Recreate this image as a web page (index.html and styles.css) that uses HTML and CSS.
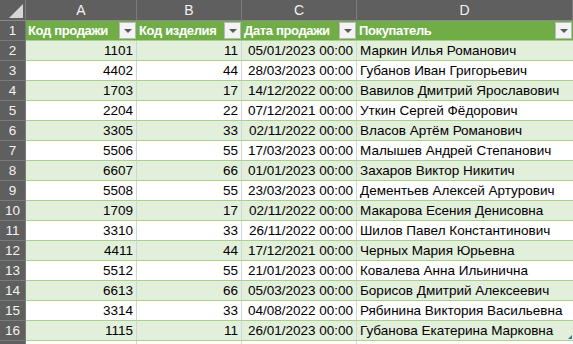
FILE: index.html
```html
<!DOCTYPE html>
<html lang="ru">
<head>
<meta charset="utf-8">
<link rel="stylesheet" href="styles.css">
</head>
<body>
<div class="sheet">
  <div class="row colhead">
    <div class="c rh corner"><svg width="15" height="15" viewBox="0 0 15 15"><polygon points="0,14 14,0 14,14" fill="#d6d6d6"/></svg></div>
    <div class="c a">A</div><div class="c b">B</div><div class="c cc">C</div><div class="c d">D</div>
  </div>
  <div class="row thead">
    <div class="c rh">1</div>
    <div class="c a"><span>Код продажи</span><i class="dd"></i></div>
    <div class="c b"><span>Код изделия</span><i class="dd"></i></div>
    <div class="c cc"><span>Дата продажи</span><i class="dd"></i></div>
    <div class="c d"><span>Покупатель</span><i class="dd"></i></div>
  </div>
  <div class="row band"><div class="c rh">2</div><div class="c a num">1101</div><div class="c b num">11</div><div class="c cc num">05/01/2023 00:00</div><div class="c d">Маркин Илья Романович</div></div>
  <div class="row"><div class="c rh">3</div><div class="c a num">4402</div><div class="c b num">44</div><div class="c cc num">28/03/2023 00:00</div><div class="c d">Губанов Иван Григорьевич</div></div>
  <div class="row band"><div class="c rh">4</div><div class="c a num">1703</div><div class="c b num">17</div><div class="c cc num">14/12/2022 00:00</div><div class="c d">Вавилов Дмитрий Ярославович</div></div>
  <div class="row"><div class="c rh">5</div><div class="c a num">2204</div><div class="c b num">22</div><div class="c cc num">07/12/2021 00:00</div><div class="c d">Уткин Сергей Фёдорович</div></div>
  <div class="row band"><div class="c rh">6</div><div class="c a num">3305</div><div class="c b num">33</div><div class="c cc num">02/11/2022 00:00</div><div class="c d">Власов Артём Романович</div></div>
  <div class="row"><div class="c rh">7</div><div class="c a num">5506</div><div class="c b num">55</div><div class="c cc num">17/03/2023 00:00</div><div class="c d">Малышев Андрей Степанович</div></div>
  <div class="row band"><div class="c rh">8</div><div class="c a num">6607</div><div class="c b num">66</div><div class="c cc num">01/01/2023 00:00</div><div class="c d">Захаров Виктор Никитич</div></div>
  <div class="row"><div class="c rh">9</div><div class="c a num">5508</div><div class="c b num">55</div><div class="c cc num">23/03/2023 00:00</div><div class="c d">Дементьев Алексей Артурович</div></div>
  <div class="row band"><div class="c rh">10</div><div class="c a num">1709</div><div class="c b num">17</div><div class="c cc num">02/11/2022 00:00</div><div class="c d">Макарова Есения Денисовна</div></div>
  <div class="row"><div class="c rh">11</div><div class="c a num">3310</div><div class="c b num">33</div><div class="c cc num">26/11/2022 00:00</div><div class="c d">Шилов Павел Константинович</div></div>
  <div class="row band"><div class="c rh">12</div><div class="c a num">4411</div><div class="c b num">44</div><div class="c cc num">17/12/2021 00:00</div><div class="c d">Черных Мария Юрьевна</div></div>
  <div class="row"><div class="c rh">13</div><div class="c a num">5512</div><div class="c b num">55</div><div class="c cc num">21/01/2023 00:00</div><div class="c d">Ковалева Анна Ильинична</div></div>
  <div class="row band"><div class="c rh">14</div><div class="c a num">6613</div><div class="c b num">66</div><div class="c cc num">05/03/2023 00:00</div><div class="c d">Борисов Дмитрий Алексеевич</div></div>
  <div class="row"><div class="c rh">15</div><div class="c a num">3314</div><div class="c b num">33</div><div class="c cc num">04/08/2022 00:00</div><div class="c d">Рябинина Виктория Васильевна</div></div>
  <div class="row band last"><div class="c rh">16</div><div class="c a num">1115</div><div class="c b num">11</div><div class="c cc num">26/01/2023 00:00</div><div class="c d">Губанова Екатерина Марковна<i class="grip"></i></div></div>
  <div class="row plain"><div class="c rh"></div><div class="c a"></div><div class="c b"></div><div class="c cc"></div><div class="c d"></div></div>
</div>
</body>
</html>
```

FILE: styles.css
```css
html, body {
  margin: 0;
  padding: 0;
  background: #ffffff;
  overflow: hidden;
}
.sheet {
  width: 573px;
  font-family: "Liberation Sans", Arial, sans-serif;
  font-size: 13.5px;
  color: #000;
}
.row {
  display: flex;
  height: 20px;
}
.c {
  box-sizing: border-box;
  height: 20px;
  border-right: 1px solid #d4d4d4;
  border-bottom: 1px solid #a9d08e;
  padding: 0 3px;
  display: flex;
  align-items: flex-end;
  padding-bottom: 1px;
  white-space: nowrap;
  overflow: hidden;
  position: relative;
  line-height: 17px;
}
.rh { width: 26px; }
.a { width: 111px; }
.b { width: 105px; }
.cc { width: 115px; }
.d { width: 216px; border-right: none; }
.num { justify-content: flex-end; }

.row .rh {
  background: #5f5f5f;
  color: #f2f2f2;
  border-right: 1px solid #7b7b7b;
  border-bottom: 1px solid #7b7b7b;
  justify-content: center;
  font-size: 13.5px;
}

.colhead { height: 21px; }
.colhead .c {
  height: 21px;
  background: #5f5f5f;
  color: #f2f2f2;
  border-right: 1px solid #7b7b7b;
  border-bottom: 1px solid #8a8a8a;
  justify-content: center;
  align-items: center;
  padding: 0;
  font-size: 14px;
}
.colhead .corner {
  align-items: flex-end;
  justify-content: flex-end;
  padding: 0 1px 1px 0;
}
.colhead .corner svg { display: block; }

.thead .c:not(.rh) {
  background: #70ad47;
  color: #ffffff;
  font-weight: bold;
  border-right: none;
  border-bottom: 1px solid #a9d08e;
  justify-content: space-between;
  padding-left: 2px;
  padding-right: 1px;
}
.thead span {
  font-size: 13px;
  letter-spacing: -0.35px;
}
.dd {
  box-sizing: border-box;
  width: 17px;
  height: 17px;
  background: #f3f3f3;
  border: 1px solid #b9b9b9;
  display: flex;
  align-items: center;
  justify-content: center;
  flex: none;
  align-self: center;
}
.dd::after {
  content: "";
  display: block;
  border-left: 4px solid transparent;
  border-right: 4px solid transparent;
  border-top: 4px solid #5a5a5a;
  margin-top: 1px;
}

.band .c:not(.rh) { background: #e2efda; }
.plain .c:not(.rh) { border-bottom: 1px solid #d4d4d4; }

.grip {
  position: absolute;
  right: 1px;
  bottom: 1px;
  width: 0;
  height: 0;
  border-left: 4px solid transparent;
  border-bottom: 4px solid #3d6fb5;
}
```
